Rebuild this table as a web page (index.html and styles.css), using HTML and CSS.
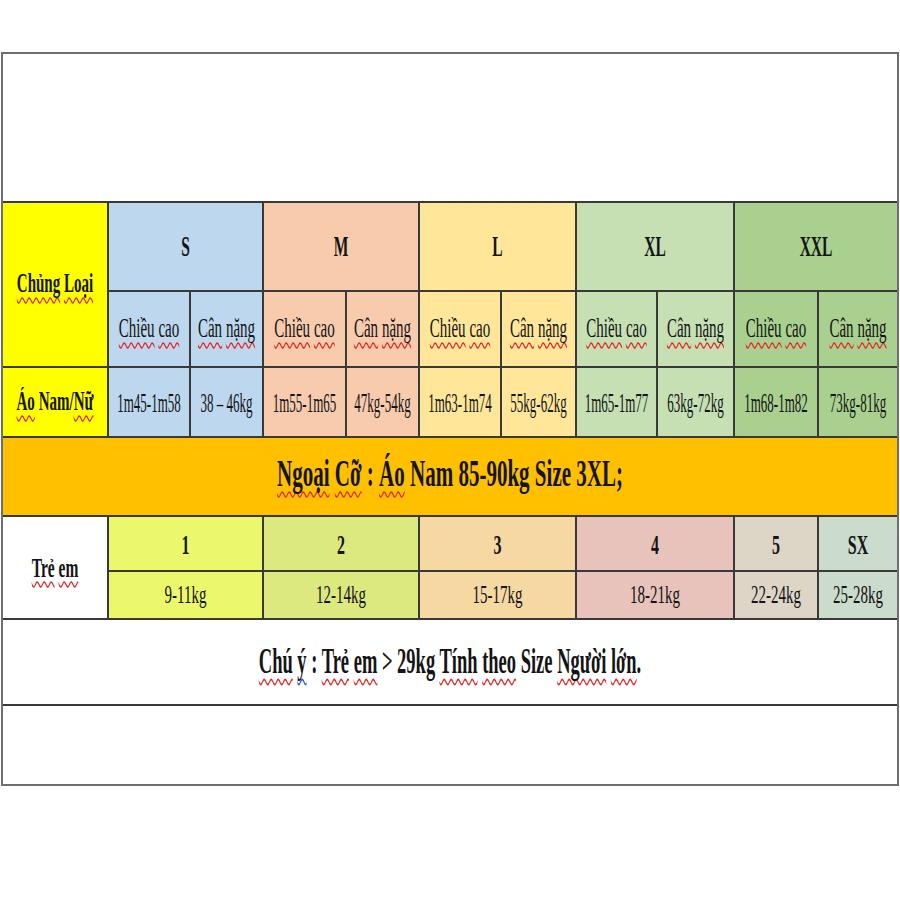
FILE: index.html
```html
<!DOCTYPE html>
<html lang="vi">
<head>
<meta charset="utf-8">
<title>Bảng size</title>
<link rel="stylesheet" href="styles.css">
</head>
<body>
<div class="frame">
  <div class="top"></div>
  <div class="grid">
    <div class="cell yel r2"><span class="t b f15"><span class="sp">Chủng</span> <span class="sp">Loại</span></span></div>
    <div class="cell s-s s2"><span class="t b f15 hd">S</span></div>
    <div class="cell s-m s2"><span class="t b f15 hd">M</span></div>
    <div class="cell s-l s2"><span class="t b f15 hd">L</span></div>
    <div class="cell s-xl s2"><span class="t b f15 hd">XL</span></div>
    <div class="cell s-xxl s2"><span class="t b f15 hd">XXL</span></div>

    <div class="cell s-s"><span class="t f15"><span class="sp">Chiều</span> <span class="sp">cao</span></span></div>
    <div class="cell s-s"><span class="t f15"><span class="sp">Cân</span> <span class="sp">nặng</span></span></div>
    <div class="cell s-m"><span class="t f15"><span class="sp">Chiều</span> <span class="sp">cao</span></span></div>
    <div class="cell s-m"><span class="t f15"><span class="sp">Cân</span> <span class="sp">nặng</span></span></div>
    <div class="cell s-l"><span class="t f15"><span class="sp">Chiều</span> <span class="sp">cao</span></span></div>
    <div class="cell s-l"><span class="t f15"><span class="sp">Cân</span> <span class="sp">nặng</span></span></div>
    <div class="cell s-xl"><span class="t f15"><span class="sp">Chiều</span> <span class="sp">cao</span></span></div>
    <div class="cell s-xl"><span class="t f15"><span class="sp">Cân</span> <span class="sp">nặng</span></span></div>
    <div class="cell s-xxl"><span class="t f15"><span class="sp">Chiều</span> <span class="sp">cao</span></span></div>
    <div class="cell s-xxl"><span class="t f15"><span class="sp">Cân</span> <span class="sp">nặng</span></span></div>

    <div class="cell yel"><span class="t b f15"><span class="sp">Áo</span> Nam/<span class="sp">Nữ</span></span></div>
    <div class="cell s-s"><span class="t data">1m45-1m58</span></div>
    <div class="cell s-s"><span class="t data">38 – 46kg</span></div>
    <div class="cell s-m"><span class="t data">1m55-1m65</span></div>
    <div class="cell s-m"><span class="t data">47kg-54kg</span></div>
    <div class="cell s-l"><span class="t data">1m63-1m74</span></div>
    <div class="cell s-l"><span class="t data">55kg-62kg</span></div>
    <div class="cell s-xl"><span class="t data">1m65-1m77</span></div>
    <div class="cell s-xl"><span class="t data">63kg-72kg</span></div>
    <div class="cell s-xxl"><span class="t data">1m68-1m82</span></div>
    <div class="cell s-xxl"><span class="t data">73kg-81kg</span></div>

    <div class="cell orange full"><span class="t b big"><span class="sp">Ngoại</span> <span class="sp">Cỡ</span> : <span class="sp">Áo</span> Nam 85-90kg Size 3XL;</span></div>

    <div class="cell white r2"><span class="t b f15 kt"><span class="sp">Trẻ</span> <span class="sp">em</span></span></div>
    <div class="cell k1 s2"><span class="t b kid">1</span></div>
    <div class="cell k2 s2"><span class="t b kid">2</span></div>
    <div class="cell k3 s2"><span class="t b kid">3</span></div>
    <div class="cell k4 s2"><span class="t b kid">4</span></div>
    <div class="cell k5"><span class="t b kid">5</span></div>
    <div class="cell k6"><span class="t b kid">SX</span></div>

    <div class="cell k1 s2"><span class="t kidw">9-11kg</span></div>
    <div class="cell k2 s2"><span class="t kidw">12-14kg</span></div>
    <div class="cell k3 s2"><span class="t kidw">15-17kg</span></div>
    <div class="cell k4 s2"><span class="t kidw">18-21kg</span></div>
    <div class="cell k5"><span class="t kidw">22-24kg</span></div>
    <div class="cell k6"><span class="t kidw">25-28kg</span></div>

    <div class="cell white full"><span class="t b note"><span class="sp">Chú</span> <span class="sp blue">ý</span> : <span class="sp">Trẻ</span> <span class="sp">em</span> &gt; 29kg <span class="sp">Tính</span> <span class="sp">theo</span> Size <span class="sp">Người</span> <span class="sp">lớn</span>.</span></div>

    <div class="cell white full"></div>
  </div>
</div>
</body>
</html>
```

FILE: styles.css
```css
html, body {
  margin: 0;
  padding: 0;
  background: #ffffff;
}

body {
  font-family: "Liberation Serif", "Times New Roman", serif;
  color: #141414;
}

.frame {
  margin: 52px 0 0 1px;
  width: 894px;
  border: 2px solid #6e6e6e;
  background: #ffffff;
}

.top {
  height: 147px;
}

.grid {
  display: grid;
  grid-template-columns: 104px 80px 71px 81px 71px 80px 73px 79px 75px 82px 78px;
  grid-template-rows: 87px 74px 68px 77px 53px 46px 84px 78px;
  gap: 2px;
  padding-top: 2px;
  background: #393939;
}

.cell {
  display: flex;
  align-items: center;
  justify-content: center;
  overflow: hidden;
}

.s2 { grid-column: span 2; }
.r2 { grid-row: span 2; }
.full { grid-column: 1 / -1; }

.yel { background: #ffff00; }
.s-s { background: #bdd7ee; }
.s-m { background: #f8cbad; }
.s-l { background: #ffe699; }
.s-xl { background: #c6e0b4; }
.s-xxl { background: #a9d08e; }
.orange { background: #ffc000; }
.white { background: #ffffff; }
.k1 { background: #ebf86c; }
.k2 { background: #dbe97e; }
.k3 { background: #f6d8a2; }
.k4 { background: #e7c3bc; }
.k5 { background: #ddd5c6; }
.k6 { background: #cbdbcc; }

.t {
  display: inline-block;
  white-space: nowrap;
  line-height: 1;
  transform: scaleY(1.75);
}

.b { font-weight: bold; }

.f15 { font-size: 15px; }

.hd {
  font-size: 15.5px;
  transform: scaleY(1.85);
}

.kt {
  font-size: 15.5px;
}

.data {
  font-size: 13px;
  transform: scaleY(2.1);
}

.big {
  font-size: 21px;
  transform: scaleY(1.8);
  margin-top: -4px;
}

.kid {
  font-size: 16px;
  transform: scaleY(1.75);
  margin-top: 2px;
}

.kidw {
  font-size: 15px;
  transform: scaleY(1.7);
}

.note {
  font-size: 18.5px;
  transform: scaleY(1.9);
}

.sp {
  text-decoration-line: underline;
  text-decoration-style: wavy;
  text-decoration-color: #e02a2a;
  text-decoration-thickness: 1px;
  text-underline-offset: 2px;
  text-decoration-skip-ink: none;
}

.sp.blue {
  text-decoration-color: #3050e0;
}
```
